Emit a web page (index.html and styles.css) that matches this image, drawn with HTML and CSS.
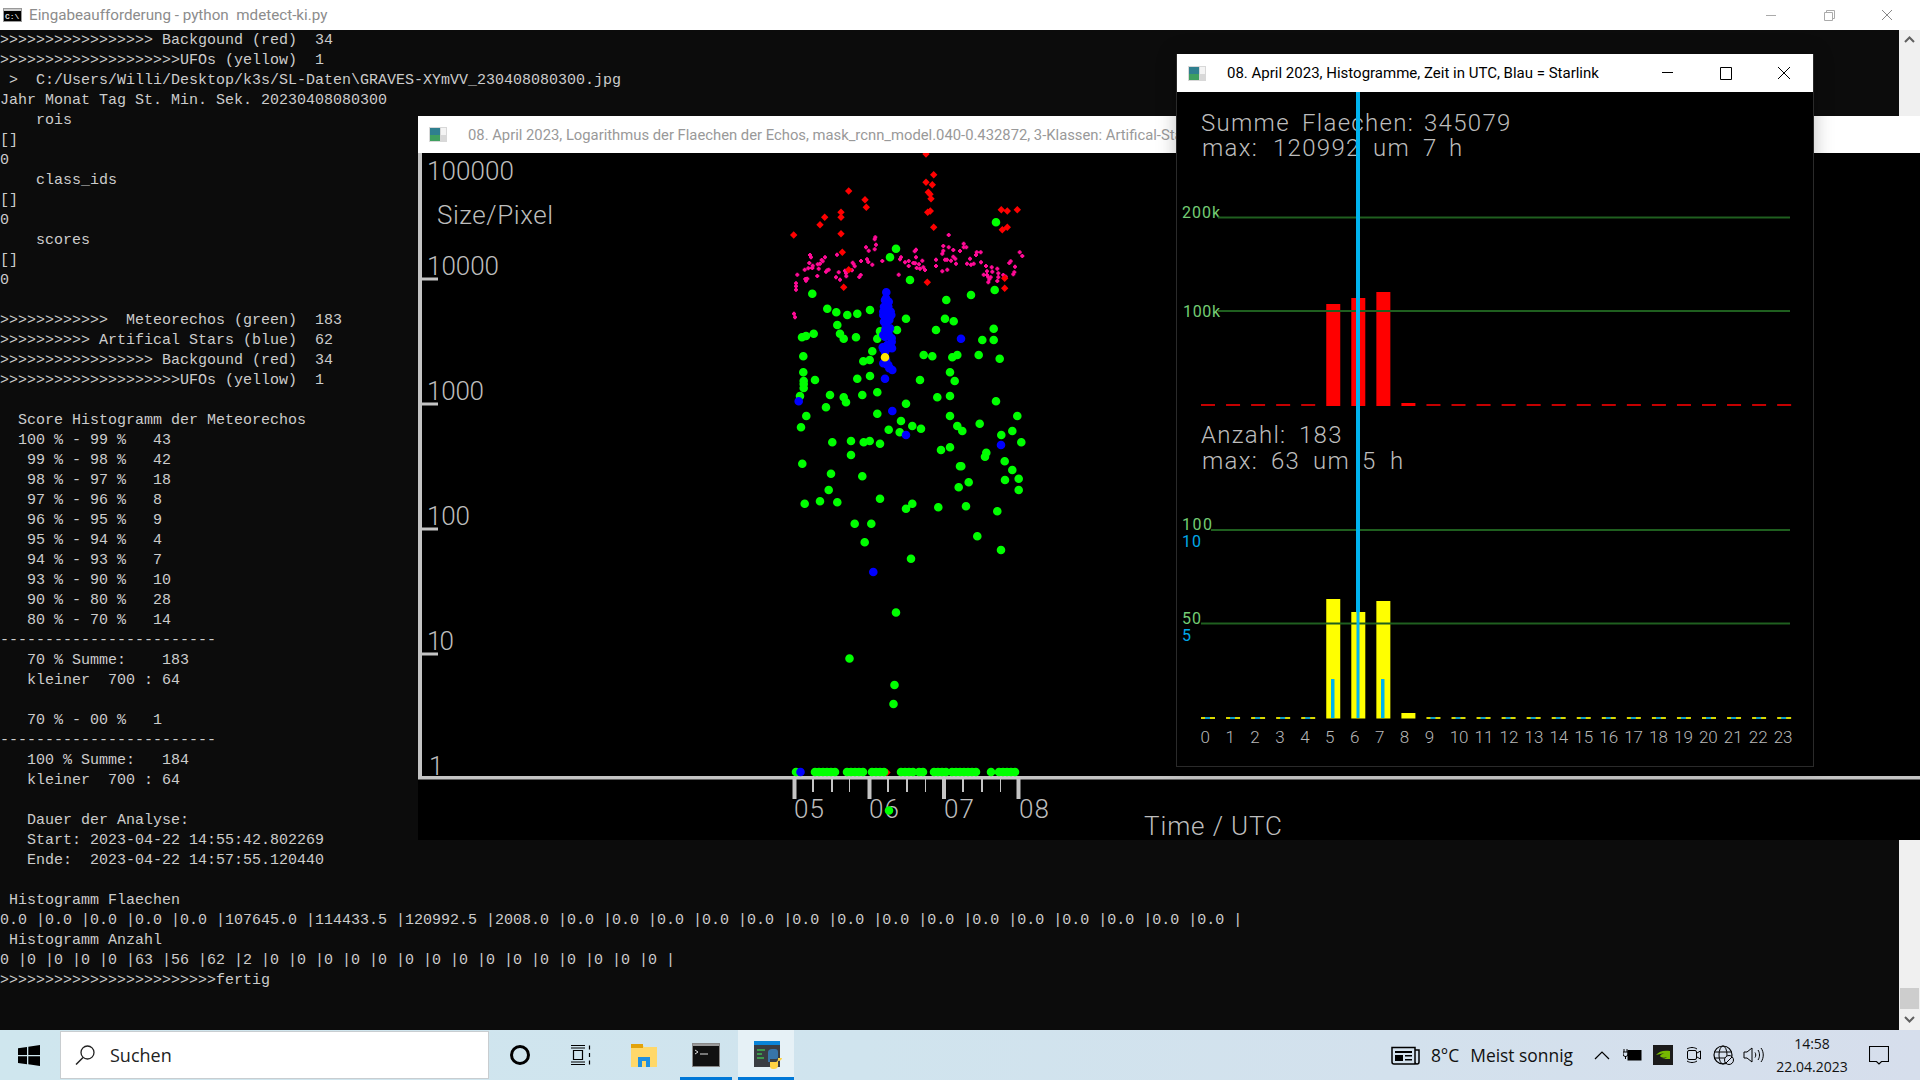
FILE: index.html
```html
<!DOCTYPE html>
<html lang="de">
<head>
    <meta charset="UTF-8">
    <title>Eingabeaufforderung - python  mdetect-ki.py</title>
    <link rel="stylesheet" href="styles.css">
</head>
<body>
    <div class="console">
        <div class="titlebar console-title">
            <svg class="app-icon" width="19" height="14" viewBox="0 0 19 14"><rect width="19" height="14" fill="#000"/><rect width="19" height="3" fill="#ccc"/><rect x="0.5" y="0.5" width="18" height="13" fill="none" stroke="#999"/><text x="2" y="11" class="cmd-glyph">C:\</text></svg>
            <span class="title-text">Eingabeaufforderung - python  mdetect-ki.py</span>
            <div class="win-buttons muted">
                <svg width="58" height="30" viewBox="0 0 58 30"><path d="M24 15.5h10" stroke="#aaa" fill="none"/></svg>
                <svg width="58" height="30" viewBox="0 0 58 30"><path d="M24.500 12.500h8v8h-8zM26.500 12.500v-2h8v8h-2" stroke="#aaa" fill="none"/></svg>
                <svg width="58" height="30" viewBox="0 0 58 30"><path d="M24 10l10 10M34 10l-10 10" stroke="#888" fill="none"/></svg>
            </div>
        </div>
        <div class="console-main">
            <div class="console-text">
                <div>>>>>>>>>>>>>>>>>> Backgound (red)  34</div>
                <div>>>>>>>>>>>>>>>>>>>>>UFOs (yellow)  1</div>
                <div> >  C:/Users/Willi/Desktop/k3s/SL-Daten\GRAVES-XYmVV_230408080300.jpg</div>
                <div>Jahr Monat Tag St. Min. Sek. 20230408080300</div>
                <div>    rois</div>
                <div>[]</div>
                <div>0</div>
                <div>    class_ids</div>
                <div>[]</div>
                <div>0</div>
                <div>    scores</div>
                <div>[]</div>
                <div>0</div>
                <div></div>
                <div>>>>>>>>>>>>>  Meteorechos (green)  183</div>
                <div>>>>>>>>>>> Artifical Stars (blue)  62</div>
                <div>>>>>>>>>>>>>>>>>> Backgound (red)  34</div>
                <div>>>>>>>>>>>>>>>>>>>>>UFOs (yellow)  1</div>
                <div></div>
                <div>  Score Histogramm der Meteorechos</div>
                <div>  100 % - 99 %   43</div>
                <div>   99 % - 98 %   42</div>
                <div>   98 % - 97 %   18</div>
                <div>   97 % - 96 %   8</div>
                <div>   96 % - 95 %   9</div>
                <div>   95 % - 94 %   4</div>
                <div>   94 % - 93 %   7</div>
                <div>   93 % - 90 %   10</div>
                <div>   90 % - 80 %   28</div>
                <div>   80 % - 70 %   14</div>
                <div>------------------------</div>
                <div>   70 % Summe:    183</div>
                <div>   kleiner  700 : 64</div>
                <div></div>
                <div>   70 % - 00 %   1</div>
                <div>------------------------</div>
                <div>   100 % Summe:   184</div>
                <div>   kleiner  700 : 64</div>
                <div></div>
                <div>   Dauer der Analyse:</div>
                <div>   Start: 2023-04-22 14:55:42.802269</div>
                <div>   Ende:  2023-04-22 14:57:55.120440</div>
                <div></div>
                <div> Histogramm Flaechen</div>
                <div>0.0 |0.0 |0.0 |0.0 |0.0 |107645.0 |114433.5 |120992.5 |2008.0 |0.0 |0.0 |0.0 |0.0 |0.0 |0.0 |0.0 |0.0 |0.0 |0.0 |0.0 |0.0 |0.0 |0.0 |0.0 |</div>
                <div> Histogramm Anzahl</div>
                <div>0 |0 |0 |0 |0 |63 |56 |62 |2 |0 |0 |0 |0 |0 |0 |0 |0 |0 |0 |0 |0 |0 |0 |0 |</div>
                <div>>>>>>>>>>>>>>>>>>>>>>>>>fertig</div>
            </div>
            <div class="scrollbar">
                <svg class="scroll-up" width="21" height="18" viewBox="0 0 21 18"><path d="M6 12l4.500-4.500 4.500 4.500" fill="none" stroke="#606060" stroke-width="2"/></svg>
                <div class="scroll-thumb"></div>
                <svg width="21" height="21" viewBox="0 0 21 21"><path d="M6 8l4.500 4.500 4.500-4.500" fill="none" stroke="#606060" stroke-width="2"/></svg>
            </div>
        </div>
    </div>

    <!-- Flaechen-Fenster -->
    <div class="window window-log">
        <div class="titlebar window-title">
            <svg class="app-icon" width="18" height="15" viewBox="0 0 18 15"><use href="#cv-icon"/></svg>
            <span class="title-text inactive">08. April 2023, Logarithmus der Flaechen der Echos, mask_rcnn_model.040-0.432872, 3-Klassen: Artifical-Sta</span>
        </div>
        <svg class="canvas" id="log-canvas" width="1502" height="687" viewBox="418 153 1502 687">
            <g class="axis">
                <rect x="418" y="153" width="4" height="626"/>
                <rect x="418" y="776" width="1502" height="3.500"/>
                <rect x="420" y="277.500" width="18" height="3"/>
                <rect x="420" y="402.500" width="18" height="3"/>
                <rect x="420" y="527.500" width="18" height="3"/>
                <rect x="420" y="652.500" width="18" height="3"/>
                <rect x="792.500" y="778" width="4" height="21"/>
                <rect x="867.500" y="778" width="4" height="21"/>
                <rect x="942" y="778" width="4" height="21"/>
                <rect x="1016.500" y="778" width="4" height="21"/>
                <rect x="812" y="778" width="2" height="14"/>
                <rect x="831" y="778" width="2" height="14"/>
                <rect x="849" y="778" width="1" height="14"/>
                <rect x="887" y="778" width="2" height="14"/>
                <rect x="906" y="778" width="2" height="14"/>
                <rect x="925" y="778" width="1" height="14"/>
                <rect x="962" y="778" width="2" height="14"/>
                <rect x="981" y="778" width="2" height="14"/>
                <rect x="1000" y="778" width="1" height="14"/>
            </g>
            <g class="hershey big">
                <text x="427" y="180" textLength="87">100000</text>
                <text x="437" y="224" textLength="116">Size/Pixel</text>
                <text x="427" y="275" textLength="72">10000</text>
                <text x="427" y="400" textLength="57">1000</text>
                <text x="427" y="525" textLength="43">100</text>
                <text x="427" y="650" textLength="27">10</text>
                <text x="429" y="775">1</text>
                <text x="794" y="818" textLength="30">05</text>
                <text x="869" y="818" textLength="30">06</text>
                <text x="944" y="818" textLength="30">07</text>
                <text x="1019" y="818" textLength="30">08</text>
                <text x="1144" y="835" textLength="138">Time / UTC</text>
            </g>
        </svg>
    </div>

    <!-- Histogramm-Fenster -->
    <div class="window window-hist">
        <div class="titlebar window-title">
            <svg class="app-icon" width="18" height="15" viewBox="0 0 18 15"><use href="#cv-icon"/></svg>
            <span class="title-text">08. April 2023, Histogramme, Zeit in UTC, Blau = Starlink</span>
            <div class="win-buttons">
                <svg width="58" height="38" viewBox="0 0 58 38"><path d="M23 18.500h11" stroke="#000" fill="none"/></svg>
                <svg width="58" height="38" viewBox="0 0 58 38"><path d="M23.500 13.500h11v12h-11z" stroke="#000" fill="none"/></svg>
                <svg width="58" height="38" viewBox="0 0 58 38"><path d="M23 13l12 12M35 13l-12 12" stroke="#000" fill="none"/></svg>
            </div>
        </div>
        <svg class="canvas" id="hist-canvas" width="636" height="674" viewBox="1177 92 636 674">
            <g class="hershey mid">
                <text y="131"><tspan x="1201">Summe </tspan><tspan x="1302">Flaechen: </tspan><tspan x="1424">345079</tspan></text>
                <text y="156"><tspan x="1202">max: </tspan><tspan x="1273">120992 </tspan><tspan x="1373">um </tspan><tspan x="1423">7 </tspan><tspan x="1449">h</tspan></text>
                <text y="443"><tspan x="1201">Anzahl: </tspan><tspan x="1299">183</tspan></text>
                <text y="469"><tspan x="1202">max: </tspan><tspan x="1271">63 </tspan><tspan x="1313">um </tspan><tspan x="1362">5 </tspan><tspan x="1390">h</tspan></text>
            </g>
            <g class="hershey small green">
                <text x="1182" y="218" textLength="38">200k</text>
                <text x="1183" y="317" textLength="37">100k</text>
                <text x="1182" y="530" textLength="30">100</text>
                <text x="1182" y="624" textLength="19">50</text>
            </g>
            <g class="hershey small cyan">
                <text x="1182" y="547" textLength="19">10</text>
                <text x="1182" y="641">5</text>
            </g>
            <g id="hist-layer"></g>
        </svg>
    </div>

    <div class="taskbar">
        <div class="task-start">
            <svg width="22" height="21" viewBox="0 0 22 21"><path d="M0 3.200l9-1.300v8.100H0zM10.300 1.700L22 0v10h-11.700zM0 11.300h9v8L0 18zM10.300 11.300H22V21l-11.700-1.700z" fill="#000"/></svg>
        </div>
        <div class="task-search">
            <svg width="20" height="20" viewBox="0 0 20 20"><circle cx="12.500" cy="7.500" r="6.500" fill="none" stroke="#222" stroke-width="1.300"/><path d="M8 12.500L1 19.500" stroke="#222" stroke-width="1.500"/></svg>
            <span>Suchen</span>
        </div>
        <div class="task-icons">
            <div class="task-item">
                <svg width="24" height="24" viewBox="0 0 24 24"><circle cx="12" cy="12" r="8.500" fill="none" stroke="#000" stroke-width="3"/></svg>
            </div>
            <div class="task-item">
                <svg width="24" height="24" viewBox="0 0 24 24"><path d="M1 2.500h14M1 21.500h14M3.500 7.500h9v9h-9zM1 19h14M1 5h14M19.500 2.500v4M19.500 17.500v4M19.500 10v4" fill="none" stroke="#000" stroke-width="1.200"/></svg>
            </div>
            <div class="task-item">
                <svg width="28" height="24" viewBox="0 0 28 24"><path d="M1 1h11l2 3h13v20H1z" fill="#ffd869"/><path d="M1 1h12v4H1z" fill="#e3a30a"/><path d="M8 24v-10h12v10h-4v-6h-4v6z" fill="#1f8fe0"/></svg>
            </div>
            <div class="task-item running">
                <svg width="28" height="24" viewBox="0 0 28 24"><rect width="28" height="24" fill="#111"/><rect width="28" height="3" fill="#9a9a9a"/><rect x="0.500" y="0.500" width="27" height="23" fill="none" stroke="#888"/><path d="M3 7l3 2-3 2M8 11h8" stroke="#ddd" fill="none"/></svg>
            </div>
            <div class="task-item running active">
                <svg width="28" height="28" viewBox="0 0 28 28"><rect width="26" height="26" fill="#3a3d42"/><rect width="26" height="4" fill="#0a84d8"/><path d="M3 9h8M3 13h5M3 17h7" stroke="#3fb950" stroke-width="1.500"/><path d="M14 11c0-2 2-3 4-3h3c2 0 3 1 3 3v5c0 2-1 2-3 2h-5v3h-2z" fill="#3775a9"/><path d="M28 17c0 2-2 3-4 3v5c0 2-2 3-4 3h-1c-2 0-3-1-3-3v-4h5c3 0 3-2 3-4z" fill="#ffd343"/></svg>
            </div>
        </div>
        <div class="task-tray">
            <svg width="30" height="20" viewBox="0 0 30 20"><path d="M1 2.500h23v16.500H3a2 2 0 0 1-2-2zM24 5h4v12a2 2 0 0 1-4 0" fill="none" stroke="#000" stroke-width="1.500"/><path d="M4 6h17v2H4zM4 10h8v6H4zM14 10h7v1.500h-7zM14 14h7v1.500h-7z" fill="#000"/></svg>
            <span class="weather-temp">8°C</span>
            <span class="weather-text">Meist sonnig</span>
            <svg class="chevron" width="16" height="10" viewBox="0 0 16 10"><path d="M1 9l7-7 7 7" fill="none" stroke="#000" stroke-width="1.200"/></svg>
            <svg class="tray-power" width="19" height="14" viewBox="0 0 19 14"><path d="M1 1v3M4 1v3M0 4h5v2a2 2 0 0 1-5 0zM2.500 8v3" fill="none" stroke="#000"/><rect x="5" y="2.500" width="13" height="9.500" fill="#000" stroke="#000"/></svg>
            <svg class="tray-nvidia" width="20" height="20" viewBox="0 0 20 20"><rect width="20" height="20" fill="#1b1b1b"/><path d="M3 10c3-4 8-5 14-4v8H9c2 0 4-1 5-2-2 1-6 1-7-1 1-2 4-3 7-2-3-1-7 0-11 1z" fill="#76b900"/></svg>
            <svg class="tray-cam" width="15" height="20" viewBox="0 0 15 20"><path d="M1 4c3-2 7-2 10 0M1 16c3 2 7 2 10 0" fill="none" stroke="#000"/><rect x="1.500" y="5.500" width="9" height="9" rx="1.500" fill="none" stroke="#000"/><path d="M11 8l3.500-2v8L11 12" fill="none" stroke="#000"/></svg>
            <svg class="tray-globe" width="21" height="20" viewBox="0 0 21 20"><circle cx="10" cy="10" r="9" fill="none" stroke="#000" stroke-width="1.200"/><ellipse cx="10" cy="10" rx="4" ry="9" fill="none" stroke="#000"/><path d="M1 7h18M1 13h18" stroke="#000"/><circle cx="16" cy="15" r="4.500" fill="#d6deec" stroke="#000"/><path d="M13 18l6-6" stroke="#000"/></svg>
            <svg class="tray-sound" width="21" height="20" viewBox="0 0 21 20"><path d="M1 7h3l5-4v14l-5-4H1z" fill="none" stroke="#000"/><path d="M12 7.500c1 1.500 1 3.500 0 5M15 5c2 3 2 7 0 10M18 3c3 4 3 10 0 14" fill="none" stroke="#000"/></svg>
            <div class="clock"><span>14:58</span><span>22.04.2023</span></div>
            <svg class="tray-note" width="20" height="19" viewBox="0 0 20 19"><path d="M.5.500h19v15h-7l-2.500 2.500-2.500-2.500h-7z" fill="none" stroke="#000" stroke-width="1.100"/></svg>
        </div>
    </div>

    <svg width="0" height="0" class="defs">
        <defs>
            <g id="cv-icon">
                <rect width="18" height="15" fill="#d8d8d8"/>
                <rect x="1" y="1" width="10" height="13" fill="#2f7f8f"/>
                <rect x="1" y="8" width="10" height="6" fill="#3f9f5f"/>
                <rect x="12" y="1" width="5" height="7" fill="#f4f4f4"/>
            </g>
        </defs>
    </svg>

    <script src="app.js"></script>
</body>
</html>
```

FILE: styles.css
```css
html, body { margin: 0; padding: 0; width: 1920px; height: 1080px; overflow: hidden; }
body { position: relative; display: flex; flex-direction: column; background: #0c0c0c; font-family: "Roboto", "Liberation Sans", sans-serif; }
svg { display: block; flex-shrink: 0; }
.defs { position: absolute; }

.console { flex: 1; display: flex; flex-direction: column; min-height: 0; }
.titlebar { display: flex; align-items: center; background: #fff; }
.console-title { height: 30px; padding-left: 3px; }
.console-title .app-icon { margin-right: 7px; }
.title-text { font-size: 15px; white-space: pre; color: #000; }
.console-title .title-text { font-size: 15.2px; color: #8c8c8c; }
.title-text.inactive { font-size: 14.8px; color: #999; }
.cmd-glyph { font: bold 8px "Liberation Mono", monospace; fill: #ddd; }
.win-buttons { margin-left: auto; display: flex; }
.win-buttons.muted { padding-right: 4px; }
.console-main { flex: 1; display: flex; min-height: 0; }
.console-text { flex: 1; padding-top: 1px; font: 15px/20px "Liberation Mono", monospace; color: #cccccc; overflow: hidden; }
.console-text div { height: 20px; white-space: pre; }
.scrollbar { width: 21px; display: flex; flex-direction: column; justify-content: flex-end; background: #f0f0f0; position: relative; }
.scroll-up { position: absolute; top: 0; left: 0; }
.scroll-thumb { height: 21px; margin: 0 1px; background: #cdcdcd; }

.window { position: absolute; background: #000; overflow: hidden; }
.window-title { height: 37px; padding-left: 11px; flex-shrink: 0; }
.window-title .app-icon { margin-right: 21px; }
.window-log { left: 418px; top: 116px; width: 1502px; height: 724px; }
.window-hist { left: 1176px; top: 54px; width: 638px; height: 713px; border: 1px solid #2a2a2a; border-top: 0; box-sizing: border-box; box-shadow: 0 0 18px rgba(0, 0, 0, 0.25); }
.window-hist .window-title { height: 38px; }

.axis rect { fill: #c4c4c4; }
.hershey { font-family: "Roboto", "Liberation Sans", sans-serif; font-weight: 300; fill: #bdbdbd; }
.hershey.big { font-size: 26px; }
.hershey.mid { font-size: 24px; letter-spacing: 1.3px; }
.hershey.small { font-size: 16px; font-weight: 400; }
.hershey.hours { font-size: 17px; fill: #b8b8b8; }
.hershey.green { fill: #74cc74; }
.hershey.cyan { fill: #00a8e8; }

.taskbar { height: 50px; flex-shrink: 0; display: flex; align-items: stretch; background: linear-gradient(90deg, #cfe6ee 0%, #d0e4ee 45%, #d6deec 100%); }
.task-start { width: 60px; display: flex; align-items: center; justify-content: center; box-sizing: border-box; padding-right: 2px; }
.task-search { width: 429px; margin: 1px 0; box-sizing: border-box; background: #fff; border: 1px solid #c8cdd0; display: flex; align-items: center; padding-left: 14px; gap: 15px; font: 18px "Open Sans", sans-serif; color: #222; }
.task-icons { display: flex; }
.task-item { width: 62px; display: flex; align-items: center; justify-content: center; box-sizing: border-box; position: relative; }
.task-item.running::after { content: ""; position: absolute; left: 5px; right: 5px; bottom: 0; height: 3px; background: #0078d7; }
.task-item.active { width: 56px; margin-left: 1px; padding-left: 4px; background: #e6f1f6; }
.task-item.active::after { left: 0; right: 0; }
.task-tray { margin-left: auto; display: flex; align-items: center; padding-right: 31px; font: 17.4px "Open Sans", sans-serif; color: #111; }
.weather-temp { margin-left: 10px; }
.weather-text { margin-left: 11px; }
.chevron { margin-left: 21px; }
.tray-power { margin-left: 13px; }
.tray-nvidia { margin-left: 11px; }
.tray-cam { margin-left: 13px; }
.tray-globe { margin-left: 12px; }
.tray-sound { margin-left: 9px; }
.clock { width: 92px; margin-left: 2px; display: flex; flex-direction: column; align-items: center; gap: 4px; font-size: 14px; line-height: 19px; }
.tray-note { margin-left: 11px; }
```

FILE: app.js
```js
// Punkte abgelesen aus den Ausschnitten, jeweils 3-fach vergroessert
const SVG_NS = 'http://www.w3.org/2000/svg';

const crop = (ox, oy, pts) => pts.map(([x, y]) => [ox + x / 3, oy + y / 3]);

const pink = crop(770, 160, [[316,232],[314,238],[288,262],[318,254],[296,272],[314,268],[120,285],[123,292],[165,292],[155,300],[158,304],[150,311],[143,313],[118,309],[128,317],[115,325],[127,324],[104,329],[146,326],[176,329],[168,335],[172,331],[82,344],[106,357],[112,356],[108,362],[142,348],[78,370],[78,379],[78,389],[72,461],[75,472],[201,284],[248,308],[251,313],[254,319],[273,303],[291,298],[295,306],[307,314],[337,303],[206,337],[198,352],[210,359],[225,332],[228,340],[229,349],[246,331],[272,345],[268,351],[386,344],[393,292],[390,298],[438,269],[434,274],[438,292],[416,303],[405,307],[416,318],[430,309],[436,310],[447,313],[440,324],[450,326],[460,322],[465,330],[457,302],[498,299],[498,318],[517,334],[532,329],[520,258],[520,272],[517,281],[536,225],[536,262],[550,270],[570,273],[581,251],[581,262],[589,262],[525,299],[531,299],[543,302],[550,290],[556,296],[558,311],[591,311],[603,314],[611,311],[600,296],[620,277],[618,285],[632,277],[633,307],[641,344],[648,318],[651,334],[665,322],[667,335],[651,345],[655,352],[658,358],[655,367],[662,352],[682,326],[685,340],[685,352],[682,363],[700,345],[707,350],[722,304],[718,309],[735,320],[733,337],[730,343],[749,277],[757,288]]);

const red = crop(770, 160, [[468,-18],[491,44],[468,67],[487,74],[475,97],[480,103],[483,116],[473,157],[481,153],[491,202],[236,93],[285,119],[289,142],[213,157],[213,172],[164,172],[150,194],[71,225],[213,221],[217,277],[236,329],[221,382],[472,367],[694,149],[712,153],[742,149],[697,209],[712,202],[704,355],[704,385]]);
red.push([887, 772.5]);

const green = [
    ...crop(770, 160, [[378,266],[360,292],[420,360],[127,401],[172,446],[199,457],[232,465],[262,461],[300,450],[408,476],[529,420],[603,405],[674,390],[678,187],[525,476],[551,484],[498,510],[202,495],[210,521],[221,536],[96,532],[108,528],[131,521],[258,532],[381,510],[322,536],[330,514],[671,506],[637,540],[671,540],[100,589],[307,574],[280,604],[299,600],[461,585],[487,589],[547,592],[562,585],[626,585],[689,596]]),
    ...crop(770, 360, [[100,37],[101,63],[101,72],[101,84],[135,60],[90,108],[180,105],[221,112],[228,127],[168,142],[277,105],[322,97],[109,168],[93,202],[322,161],[408,131],[262,56],[300,48],[450,60],[540,37],[554,63],[502,112],[540,108],[678,124],[540,168],[562,198],[577,213],[629,191],[742,168],[694,225],[727,213],[754,247],[393,183],[356,209],[389,217],[427,198],[453,206],[187,247],[243,243],[281,247],[299,243],[330,251],[243,285],[513,270],[540,262],[649,278],[645,290],[97,311],[183,341],[277,349],[570,319],[574,319],[704,304],[727,330],[596,367],[566,382],[705,360],[746,356],[746,390],[176,390],[104,431],[150,424],[202,427],[330,416],[427,431],[408,446],[505,442],[588,439],[682,454],[254,491],[304,491],[284,547],[622,529],[693,570],[423,596]]),
    [896, 612.5], [849.5, 658.5], [894.5, 685], [893.5, 704], [889, 810.5],
];

// untere Reihe: Echos mit Flaeche 1
[[796, 797], [815, 837], [847, 863], [872, 885], [901, 914], [919, 924], [934, 946], [952, 977], [991, 994], [999, 1018]].forEach(([a, b]) => {
    for (let x = a; x <= b; x += 4) green.push([x, 772]);
});

const blue = [
    ...crop(770, 160, [[349,397],[348,415],[349,430],[351,445],[351,460],[353,470],[349,484],[347,495],[351,503],[340,525],[355,517],[360,530],[365,545],[355,565],[340,567],[345,575],[342,610],[355,615],[360,625],[573,536],[340,455],[362,455],[345,470],[358,480],[340,465],[355,440],[345,530],[350,500],[342,440],[364,465],[345,420],[356,425],[342,485],[360,470],[346,510],[360,505],[338,562],[366,565],[352,555],[365,535],[348,600]]),
    ...crop(770, 360, [[340,10],[352,15],[367,30],[345,56],[86,124],[367,153],[408,225],[693,255],[310,636],[358,25]]),
    [800.5, 772],
];

const yellow = crop(770, 160, [[345,592]]);

function add(parent, name, attrs, text) {
    const el = document.createElementNS(SVG_NS, name);
    Object.keys(attrs).forEach(k => el.setAttribute(k, attrs[k]));
    if (text !== undefined) el.textContent = text;
    parent.appendChild(el);
    return el;
}

function dots(svg, pts, color, d) {
    add(svg, 'path', { d: pts.map(([x, y]) => `M${x.toFixed(1)} ${y.toFixed(1)}${d}`).join(''), fill: color });
}

const round = r => `m${-r} 0a${r} ${r} 0 1 0 ${2 * r} 0a${r} ${r} 0 1 0 ${-2 * r} 0`;
const logCanvas = document.getElementById('log-canvas');
dots(logCanvas, pink, '#ff0a96', 'm-1 -2h2v1h1v2h-1v1h-2v-1h-1v-2h1z');
dots(logCanvas, red, '#ff0000', 'm-3.700 0l3.700 -3.700l3.700 3.700l-3.700 3.700z');
dots(logCanvas, green, '#00ff00', round(4.3));
dots(logCanvas, blue, '#0000ff', round(4.3));
dots(logCanvas, yellow, '#ffe600', round(4.3));

// Histogramme
const hist = document.getElementById('hist-layer');
const barX = i => 1201 + 25.05 * i;
const areaTop = { 5: 304, 6: 298, 7: 292, 8: 403 };
const countTop = { 5: 599, 6: 612, 7: 601, 8: 713 };

for (let i = 0; i < 24; i++) {
    const x = barX(i);
    if (areaTop[i]) {
        add(hist, 'rect', { x, y: areaTop[i], width: 14, height: 406 - areaTop[i], fill: '#ff0000' });
    } else {
        add(hist, 'rect', { x, y: 404, width: 14, height: 2, fill: '#c40000' });
    }
    if (countTop[i]) {
        add(hist, 'rect', { x, y: countTop[i], width: 14, height: 718.500 - countTop[i], fill: '#ffff00' });
    } else {
        add(hist, 'rect', { x, y: 717, width: 14, height: 2, fill: '#d8d800' });
        add(hist, 'rect', { x: x + 4, y: 717, width: 5, height: 2, fill: '#0a9ac8' });
    }
    add(hist, 'text', { x: 1200.5 + 24.92 * i, y: 743, class: 'hershey hours' }, String(i));
}

[[1218, 217.500], [1218, 311], [1211, 530], [1201, 623.500]].forEach(([x, y]) => {
    add(hist, 'rect', { x, y: y - 1, width: 1790 - x, height: 2, fill: '#1f5f1f' });
});

add(hist, 'rect', { x: 1331, y: 679, width: 3.500, height: 39, fill: '#00b4f0' });
add(hist, 'rect', { x: 1381, y: 679, width: 3.500, height: 39, fill: '#00b4f0' });
add(hist, 'rect', { x: 1356, y: 92, width: 4, height: 520, fill: '#00b4f0' });
add(hist, 'rect', { x: 1356.500, y: 612, width: 3, height: 106, fill: '#00b4f0' });
```
